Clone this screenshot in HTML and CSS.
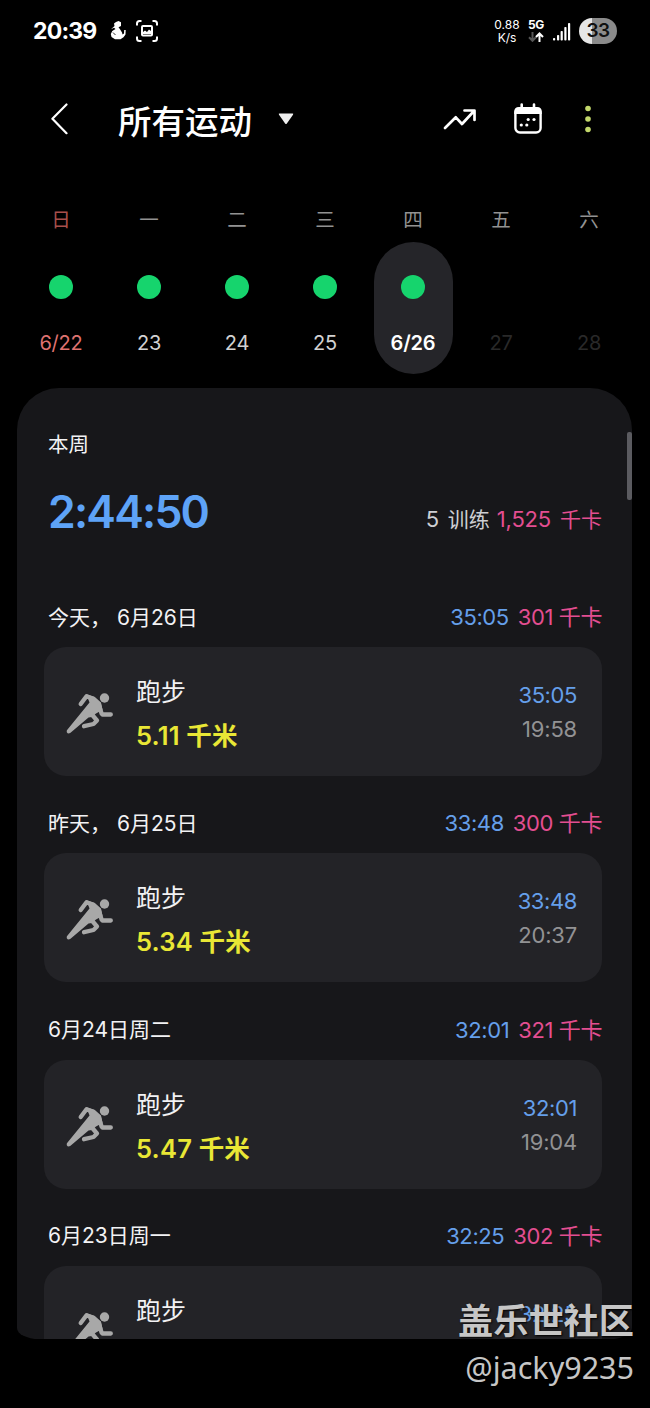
FILE: index.html
```html
<!DOCTYPE html>
<html lang="zh-CN">
<head>
<meta charset="utf-8">
<title>所有运动</title>
<link rel="stylesheet" href="styles.css">
</head>
<body>
<svg class="defs" width="0" height="0">
  <symbol id="runner" viewBox="0 0 48 44">
    <circle cx="38.500" cy="6" r="4.700"/>
    <path class="limb" d="M14.700 12 20.500 4.200 27.500 7 33 12.500 35.500 21.300 36.500 22.500H44.800"/>
    <path d="M20.500 2.200 28.500 4.800 35 10.500 36.500 18 30 21.500 26 25 22.500 25.500 4.500 40.800Q2 42.500.800 40.300Q.3 38.800 1.500 37.500L23.500 10.500Z"/>
    <path class="limb" d="M25 21.500 31 28.500 27.500 32 18 34.200"/>
  </symbol>
</svg>
<div class="screen">
  <header class="status">
    <span class="clock">20:39</span>
    <svg class="cat" width="16" height="19" viewBox="0 0 16 19"><path d="M4 2.500 6 1 8.500 0 11 1.200 11 5 8.500 6.300 10 8.300 12 11.500 12.500 13.500 14 12.500 14.200 9H15.700L15.500 13.500 13.500 16.200 10.500 18.200H5L1.500 16 .8 13 2.300 10 5.500 8 4 6.800 1 8.300 4.500 5Z" fill="#fff"/><path d="M3 11.500 5.500 14" stroke="#000" stroke-width=".8"/></svg>
    <svg class="shot" width="22" height="22" viewBox="0 0 22 22" fill="none" stroke="#fff" stroke-width="2"><path d="M1 5.500V3.500Q1 1 3.500 1H5.500M16.500 1H18.500Q21 1 21 3.500V5.500M21 16.500V18.500Q21 21 18.500 21H16.500M5.500 21H3.500Q1 21 1 18.500V16.500"/><rect x="6" y="6" width="10" height="9.500" rx="1"/><path d="M7 14V12L9 10.500 11 12 13 9.500 15 11V14Z" fill="#fff" stroke="none"/></svg>
    <span class="speed"><span>0.88</span><span>K/s</span></span>
    <span class="net"><b>5G</b><svg width="16" height="10" viewBox="0 0 16 10" fill="none" stroke-width="2"><path d="M4.500 0V9M1 5.300 4.500 8.800 8 5.300" stroke="#555"/><path d="M11.500 10V1.500M8 5 11.500 1.500 15 5" stroke="#fff"/></svg></span>
    <svg class="signal" width="18" height="18" viewBox="0 0 18 18" fill="#fff"><rect y="15" width="2.200" height="2.500" rx=".8"/><rect x="4" y="12" width="2.200" height="5.500" rx=".8"/><rect x="7.600" y="8" width="2.200" height="9.500" rx=".8"/><rect x="11.300" y="4" width="2.200" height="13.500" rx=".8"/><rect x="15" y="0" width="2.200" height="17.500" rx=".8"/></svg>
    <span class="battery">33</span>
  </header>
  <nav class="toolbar">
    <svg class="back" width="18" height="32" viewBox="0 0 18 32" fill="none" stroke="#fff" stroke-width="2.200" stroke-linecap="round" stroke-linejoin="round"><path d="M16.500 1.500 2.400 15.800 16.500 30.200"/></svg>
    <h1>所有运动</h1>
    <svg class="caret" width="16" height="12" viewBox="0 0 16 12"><path d="M1.500.5H14.500Q15.800.5 15 1.700L8.700 10.700Q8 11.500 7.300 10.700L1 1.700Q.2.500 1.500.5Z" fill="#efefef"/></svg>
    <svg class="trend" width="34" height="22" viewBox="0 0 34 22" fill="none" stroke="#fff" stroke-width="2.700" stroke-linecap="round" stroke-linejoin="round"><path d="M2 20 12.800 9.300 19 16 31 3M21.500 2.500H31.500V12"/></svg>
    <svg class="cal" width="30" height="32" viewBox="0 0 30 32"><rect x="2.400" y="5.500" width="25.200" height="24" rx="4.500" fill="none" stroke="#fff" stroke-width="2.400"/><path d="M1.200 11V9Q1.200 4 6 4H24Q28.800 4 28.800 9V11Z" fill="#fff"/><path d="M8.700 1.500V5M21 1.500V5" stroke="#fff" stroke-width="2.600" stroke-linecap="round"/><g fill="#fff"><circle cx="15.200" cy="16.500" r="1.600"/><circle cx="21" cy="16.500" r="1.600"/><circle cx="8.300" cy="22" r="1.600"/><circle cx="13.800" cy="22" r="1.600"/></g></svg>
    <svg class="more" width="8" height="28" viewBox="0 0 8 28" fill="#c3d86b"><circle cx="4" cy="3.500" r="2.800"/><circle cx="4" cy="14" r="2.800"/><circle cx="4" cy="24.500" r="2.800"/></svg>
  </nav>
  <section class="week">
    <div class="day sun"><span class="name">日</span><div class="cell"><i class="dot"></i><span class="date">6/22</span></div></div>
    <div class="day"><span class="name">一</span><div class="cell"><i class="dot"></i><span class="date">23</span></div></div>
    <div class="day"><span class="name">二</span><div class="cell"><i class="dot"></i><span class="date">24</span></div></div>
    <div class="day"><span class="name">三</span><div class="cell"><i class="dot"></i><span class="date">25</span></div></div>
    <div class="day today"><span class="name">四</span><div class="cell"><i class="dot"></i><span class="date">6/26</span></div></div>
    <div class="day future"><span class="name">五</span><div class="cell"><i class="dot"></i><span class="date">27</span></div></div>
    <div class="day future"><span class="name">六</span><div class="cell"><i class="dot"></i><span class="date">28</span></div></div>
  </section>
  <main class="panel">
    <div class="label">本周</div>
    <div class="summary">
      <span class="total">2:44:50</span>
      <span class="stats"><span class="count">5<span class="unit">训练</span></span><span class="kcal">1,525<span class="unit">千卡</span></span></span>
    </div>
    <section class="entry">
      <div class="head"><span class="when">今天，<span class="md">6月26日</span></span><span class="dur">35:05</span><span class="kcal">301 千卡</span></div>
      <div class="card"><svg class="runner"><use href="#runner"/></svg><div class="info"><span class="sport">跑步</span><span class="dist">5.11 千米</span></div><div class="times"><span class="dur">35:05</span><span class="at">19:58</span></div></div>
    </section>
    <section class="entry">
      <div class="head"><span class="when">昨天，<span class="md">6月25日</span></span><span class="dur">33:48</span><span class="kcal">300 千卡</span></div>
      <div class="card"><svg class="runner"><use href="#runner"/></svg><div class="info"><span class="sport">跑步</span><span class="dist">5.34 千米</span></div><div class="times"><span class="dur">33:48</span><span class="at">20:37</span></div></div>
    </section>
    <section class="entry">
      <div class="head"><span class="when">6月24日周二</span><span class="dur">32:01</span><span class="kcal">321 千卡</span></div>
      <div class="card"><svg class="runner"><use href="#runner"/></svg><div class="info"><span class="sport">跑步</span><span class="dist">5.47 千米</span></div><div class="times"><span class="dur">32:01</span><span class="at">19:04</span></div></div>
    </section>
    <section class="entry">
      <div class="head"><span class="when">6月23日周一</span><span class="dur">32:25</span><span class="kcal">302 千卡</span></div>
      <div class="card"><svg class="runner"><use href="#runner"/></svg><div class="info"><span class="sport">跑步</span></div><div class="times"><span class="dur">32:25</span></div></div>
    </section>
    <i class="scrollbar"></i>
  </main>
  <div class="watermark"><span class="community">盖乐世社区</span><span class="user">@jacky9235</span></div>
</div>
</body>
</html>
```
FILE: styles.css
```css
* { box-sizing: border-box; }
body { margin: 0; background: #000; }
.defs { position: absolute; }
.screen {
  position: relative; width: 650px; height: 1408px; overflow: hidden;
  background: #000; color: #f2f2f4;
  font-family: Inter, "Noto Sans CJK SC", sans-serif; font-size: 22px;
  white-space: nowrap;
}
svg { display: block; flex: none; }

.status { display: flex; align-items: center; height: 61px; padding: 0 33px; color: #fff; }
.clock { width: 77px; font-size: 23px; font-weight: 700; letter-spacing: -.8px; }
.shot { margin-left: 10px; }
.speed { display: flex; flex-direction: column; align-items: center; width: 26px; margin-left: 336px; font-size: 12px; line-height: 13px; }
.net { display: flex; flex-direction: column; width: 16px; margin-left: 8px; font-size: 12px; line-height: 12px; letter-spacing: -.3px; }
.net svg { margin-top: 1px; }
.signal { margin: 2px 0 0 9px; }
.battery {
  width: 38px; height: 26px; margin-left: 8px; border-radius: 13px;
  background: linear-gradient(90deg, #e6e6e6 33%, #8b8b8b 33%);
  color: #111; font-size: 19px; font-weight: 600; line-height: 26px; text-align: center; letter-spacing: -.5px;
}

.toolbar { display: flex; align-items: center; height: 116px; padding-left: 50px; }
.toolbar h1 { width: 134px; margin: 6px 0 0 50px; color: #fff; font-size: 33.5px; font-weight: 500; line-height: 48px; }
.caret { margin-left: 26px; }
.trend { margin-left: 149px; }
.cal { margin-left: 36px; }
.more { margin-left: 41px; }

.week { display: grid; grid-template-columns: repeat(7, 88px); height: 211px; padding: 28px 0 0 17px; }
.day { display: flex; flex-direction: column; align-items: center; color: #d2d2d2; }
.name { height: 37px; color: #929292; font-size: 19.5px; line-height: 30px; }
.cell { display: flex; flex-direction: column; align-items: center; width: 79px; height: 132px; padding-top: 33px; border-radius: 40px; }
.dot { width: 24px; height: 24px; border-radius: 50%; background: #16d46d; }
.date { margin-top: 32px; font-size: 20px; line-height: 24px; letter-spacing: -.2px; }
.sun .name { color: #a9504c; }
.sun .date { color: #df7270; }
.today .cell { background: #252529; }
.today .date { color: #fff; font-weight: 600; }
.future .dot { visibility: hidden; }
.future .date { color: #292929; }

.panel {
  position: relative; width: 615px; height: 951px; margin-left: 17px; padding: 40px 30px 0 27px;
  border-radius: 42px 42px 22px 22px / 42px 42px 11px 11px;
  background: #17171a; overflow: hidden;
}
.label { padding-left: 4px; font-size: 20.500px; line-height: 34px; }
.summary { display: flex; justify-content: space-between; height: 106px; padding: 21px 0 0 4px; }
.total { color: #5ea3f7; font-size: 44.5px; font-weight: 600; line-height: 58px; letter-spacing: -1.8px; }
.stats { display: flex; gap: 7px; padding-top: 21px; line-height: 30px; letter-spacing: -.2px; }
.stats .unit { margin-left: 9px; font-size: 21px; letter-spacing: 0; }
.count { color: #cecfd3; }
.dur { color: #659fea; }
.kcal { color: #e34e91; }
.entry { height: 206.3px; }
.head { display: flex; align-items: center; gap: 9px; height: 79px; padding: 19px 0 0 4px; letter-spacing: -.4px; line-height: 40px; }
.when { flex: 1; padding-top: 1px; font-size: 21px; letter-spacing: 0; }
.md { margin-left: 6px; }
.card { display: flex; height: 129px; padding: 27px 25px 0 22px; border-radius: 22px; background: #232327; }
.runner { width: 48px; height: 44px; margin-top: 18px; fill: #a8a8a8; }
.limb { fill: none; stroke: #a8a8a8; stroke-width: 4.300px; stroke-linecap: round; stroke-linejoin: round; }
.info { display: flex; flex: 1; flex-direction: column; margin-left: 22px; }
.sport { padding-top: 1px; font-size: 25px; line-height: 34px; }
.dist { margin-top: 10px; color: #e9e735; font-size: 25.5px; font-weight: 600; line-height: 34px; letter-spacing: .2px; }
.times { display: flex; flex-direction: column; align-items: flex-end; padding-top: 4px; line-height: 34px; letter-spacing: -.4px; }
.at { color: #929294; letter-spacing: -.2px; }
.scrollbar { position: absolute; top: 44px; right: 0; width: 5px; height: 68px; border-radius: 2px; background: #5b5b60; }
.watermark {
  position: absolute; top: 1295px; right: 16px; display: flex; flex-direction: column; align-items: flex-end;
  color: #c6c6c6; text-shadow: 1px 1px 2px #000;
}
.community { font-size: 35.200px; font-weight: 700; line-height: 52px; }
.user { font-family: "Noto Sans", sans-serif; font-size: 30.500px; line-height: 40px; }
```
